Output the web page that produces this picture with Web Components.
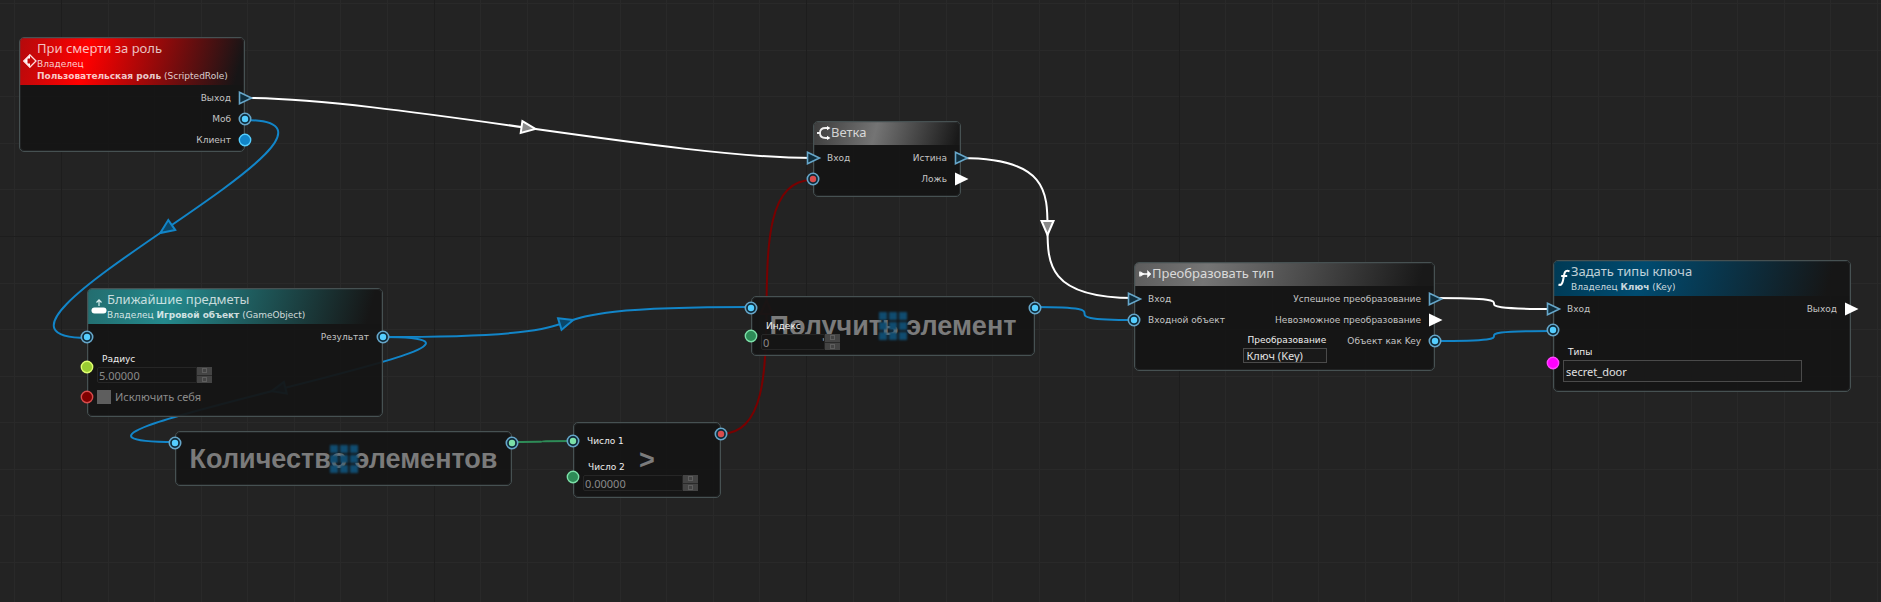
<!DOCTYPE html>
<html lang="ru">
<head>
<meta charset="utf-8">
<title>Граф сценария</title>
<style>
  html, body { margin: 0; background: #232323; }
  body { font-family: "Noto Sans", sans-serif; color: #c8c8c8; }
</style>
</head>
<body>
<graph-canvas>
  <graph-node x="19" y="37" w="226" h="115" hue="event" icon="event" caption="При смерти за роль">
    <span slot="sub">Владелец</span>
    <span slot="sub"><b>Пользовательская роль</b> (ScriptedRole)</span>
    <graph-port slot="out" kind="flow" linked>Выход</graph-port>
    <graph-port slot="out" kind="object" linked>Моб</graph-port>
    <graph-port slot="out" kind="object">Клиент</graph-port>
  </graph-node>

  <graph-node x="87" y="288" w="296" h="129" hue="query" icon="item" caption="Ближайшие предметы">
    <span slot="sub">Владелец <b>Игровой объект</b> (GameObject)</span>
    <graph-port slot="in" kind="object" linked></graph-port>
    <graph-port slot="in" kind="float" field><graph-number label="Радиус" value="5.00000" w="115"></graph-number></graph-port>
    <graph-port slot="in" kind="bool" field><graph-check label="Исключить себя"></graph-check></graph-port>
    <graph-port slot="out" kind="object" linked>Результат</graph-port>
  </graph-node>

  <graph-node x="175" y="431" w="337" h="55" big="Количество элементов" array>
    <graph-port slot="in" kind="object" linked></graph-port>
    <graph-port slot="out" kind="int" linked></graph-port>
  </graph-node>

  <graph-node x="573" y="422" w="148" h="76" big="&gt;">
    <graph-port slot="in" kind="int" linked tall>Число 1</graph-port>
    <graph-port slot="in" kind="int" field><graph-number label="Число 2" value="0.00000" w="115" flush></graph-number></graph-port>
    <graph-port slot="out" kind="bool" linked></graph-port>
  </graph-node>

  <graph-node x="751" y="296" w="284" h="60" big="Получить элемент" array>
    <graph-port slot="in" kind="object" linked></graph-port>
    <graph-port slot="in" kind="int" field><graph-number label="Индекс" value="0" w="79" flush></graph-number></graph-port>
    <graph-port slot="out" kind="object" linked></graph-port>
  </graph-node>

  <graph-node x="813" y="121" w="148" h="76" hue="flow-mid" icon="branch" caption="Ветка">
    <graph-port slot="in" kind="flow" linked>Вход</graph-port>
    <graph-port slot="in" kind="bool" linked></graph-port>
    <graph-port slot="out" kind="flow" linked>Истина</graph-port>
    <graph-port slot="out" kind="flow">Ложь</graph-port>
  </graph-node>

  <graph-node x="1134" y="262" w="301" h="109" hue="flow" icon="cast" caption="Преобразовать тип">
    <graph-port slot="in" kind="flow" linked>Вход</graph-port>
    <graph-port slot="in" kind="object" linked>Входной объект</graph-port>
    <graph-choice slot="center" label="Преобразование" value="Ключ (Key)"></graph-choice>
    <graph-port slot="out" kind="flow" linked>Успешное преобразование</graph-port>
    <graph-port slot="out" kind="flow">Невозможное преобразование</graph-port>
    <graph-port slot="out" kind="object" linked>Объект как Key</graph-port>
  </graph-node>

  <graph-node x="1553" y="260" w="298" h="132" hue="func" icon="func" caption="Задать типы ключа">
    <span slot="sub">Владелец <b>Ключ</b> (Key)</span>
    <graph-port slot="in" kind="flow" linked>Вход</graph-port>
    <graph-port slot="in" kind="object" linked></graph-port>
    <graph-port slot="in" kind="string" field><graph-text label="Типы" value="secret_door"></graph-text></graph-port>
    <graph-port slot="out" kind="flow">Выход</graph-port>
  </graph-node>
</graph-canvas>

<script>
const ICONS = {
  event: '<svg width="14" height="14" viewBox="0 0 14 14"><path d="M7 0 0 7l7 7V9.500H4.500v-5H7z" fill="#fff"/><path d="M7 1l6 6-6 6-6-6z" fill="none" stroke="#fdd" stroke-width="1.300"/></svg>',
  item: '<svg width="16" height="16" viewBox="0 0 16 16"><path d="M8 8V2M5.500 4.500 8 1.800l2.500 2.700" fill="none" stroke="#d8eeee" stroke-width="1.200"/><rect x="0.500" y="9.500" width="15" height="6" rx="3" fill="#fff"/></svg>',
  branch: '<svg width="14" height="14" viewBox="0 0 14 14"><path d="M0 7h3M11 2H8.500C5 2 3 4 3 7s2 5 5.500 5H11" fill="none" stroke="#eee" stroke-width="1.800"/><path d="M10 0l3.500 2L10 4.200zM10 9.800l3.500 2.200L10 14z" fill="#fff"/></svg>',
  cast: '<svg width="14" height="14" viewBox="0 0 14 14"><path d="M2 4.500v5M2 7h8" fill="none" stroke="#fff" stroke-width="1.600"/><path d="M3 5l3 2-3 2zM9.500 3.500 13 7 9.500 10.500z" fill="#fff" stroke="#fff" stroke-width="0.500"/></svg>',
  func: '<svg width="14" height="18" viewBox="0 0 14 18"><path d="M1.500 15.500c2.500 1.200 3.800-.5 4.500-4L7.300 5C7.900 2.200 9.500 1 12.500 2.300M4.200 7h6" fill="none" stroke="#fff" stroke-width="2"/></svg>'
};

const KINDS = {
  object: ['#1285c8', '#55ceff'],
  float:  ['#9acd32', '#e0ff70'],
  bool:   ['#800000', '#d84c4c'],
  int:    ['#2e8b57', '#7ce0a8'],
  string: ['#ff00ff', '#ff45ff']
};

const HUES = {
  event: 'linear-gradient(105deg, #b40a0c, #ff0000 30%, #171516 96%)',
  query: 'linear-gradient(105deg, #236d6f, #24898c 28%, #161616 95%)',
  flow: 'linear-gradient(105deg, #5c5c5c, #757575 24%, #191919 95%)',
  'flow-mid': 'linear-gradient(105deg, #3c3c3c, #747474 42%, #191919 97%)',
  func: 'linear-gradient(105deg, #003a55, #004b70 30%, #161616 92%)'
};

class Base extends HTMLElement {
  connectedCallback() {
    if (!this.shadowRoot) this.attachShadow({ mode: 'open' }).innerHTML = this.view();
  }
  at(name) { return (this.getAttribute(name) || '').replace(/&/g, '&amp;').replace(/</g, '&lt;').replace(/"/g, '&quot;'); }
}

class GraphCanvas extends Base {
  view() {
    /* x1, y1, x2, y2, handle length, colour, arrow fill, arrow angle */
    const wires = [
      [245, 98, 812, 158, 140, '#fff', '#8a8a8a', 8],
      [245, 120, 87, 338, 160, '#1285c8', '#0b4668', 145],
      [382, 337, 751, 307, 280, '#1285c8', '#0b4668', -17],
      [382, 337, 175, 442, 211, '#1285c8', '#0b4668', 166],
      [512, 442, 572, 441, 60, '#2e8b57'],
      [721, 434, 812, 180, 88, '#780000', '#400000', -90],
      [961, 158, 1134, 298, 173, '#fff', '#8a8a8a', 90],
      [1035, 307, 1134, 320, 99, '#1285c8'],
      [1435, 298, 1553, 309, 118, '#fff'],
      [1435, 341, 1553, 331, 118, '#1285c8']
    ];
    let grid = '', majors = '', lines = '';
    for (let i = -6; i < 90; i++) {
      const step = Math.round(i * 745 / 16), x = 61 + step, y = 236 + step;
      const s = `<path d="M${x} 0h1v3000h-1zM0 ${y}h4200v1H0z"/>`;
      if (i % 8) grid += s; else majors += s;
    }
    for (const [a, b, c, d, k, col, fill, ang] of wires) {
      lines += `<path d="M${a} ${b}C${a + k} ${b} ${c - k} ${d} ${c} ${d}" fill="none" stroke="${col}" stroke-width="2"/>`;
      if (fill) lines += `<path d="M-7-6 7 0-7 6z" fill="${fill}" stroke="${col}" stroke-width="2" transform="translate(${(a + c) / 2} ${(b + d) / 2}) rotate(${ang})"/>`;
    }
    return `<style>
      :host { display: block; position: relative; min-height: 100vh; overflow: hidden; background: #232323; }
      svg { position: absolute; inset: 0; width: 100%; height: 100%; }
    </style>
    <svg aria-hidden="true"><g fill="#292929"><path d="M0 50h4200v1H0zM0 3h4200v1H0z"/>${grid}</g><g fill="#1d1d1d">${majors}</g>${lines}</svg>
    <slot></slot>`;
  }
}

class GraphNode extends Base {
  view() {
    const cap = this.at('caption'), big = this.at('big');
    let dots = '';
    if (this.hasAttribute('array')) {
      for (let i = 0; i < 9; i++) dots += `<rect x="${2 + i % 3 * 10}" y="${2 + Math.floor(i / 3) * 10}" width="8" height="8"/>`;
      dots = `<svg class="dots" width="32" height="32" viewBox="0 0 32 32" fill="#104c70">${dots}</svg>`;
    }
    return `<style>
      :host {
        display: flex; flex-direction: column; box-sizing: border-box; position: absolute;
        left: ${this.at('x')}px; top: ${this.at('y')}px; width: ${this.at('w')}px; min-height: ${this.at('h')}px;
        border: 1px solid #465152; border-radius: 5px; background: rgba(21, 21, 21, .95);
        outline: 1px solid rgba(70, 81, 82, .25); outline-offset: -2px;
      }
      header {
        display: flex; align-items: center; padding: 1px 3px 3px; border-radius: 4px 4px 0 0;
        background: ${HUES[this.at('hue')] || 'none'};
      }
      header svg { flex: none; display: block; }
      h2 { margin: 0 0 1px; font: 400 13px/18px "Noto Sans", sans-serif; color: rgba(255, 255, 255, .75); white-space: nowrap; }
      ::slotted(span) { display: block; font: 9px/12px "DejaVu Sans", sans-serif; color: rgba(255, 255, 255, .8); white-space: nowrap; }
      .body { flex: 1; display: grid; padding-top: ${cap ? 2 : 0}px; }
      .col { grid-area: 1 / 1; display: flex; flex-direction: column; }
      .in { justify-self: start; z-index: 1; }
      .out { justify-self: end; z-index: 1; }
      .mid { justify-self: center; justify-content: flex-end; padding-bottom: 7px; }
      .big { justify-self: center; align-self: center; display: grid; place-items: center; }
      .big > * { grid-area: 1 / 1; }
      .big p { margin: 0; font: 700 27px/32px "Liberation Sans", sans-serif; color: rgba(255, 255, 255, .44); white-space: nowrap; }
      .dots { filter: blur(1px); }
    </style>
    ${cap ? `<header>${ICONS[this.at('icon')]}<div><h2>${cap}</h2><slot name="sub"></slot></div></header>` : ''}
    <div class="body">
      ${big ? `<div class="col big">${dots}<p>${big}</p></div>` : ''}
      <div class="col mid"><slot name="center"></slot></div>
      <div class="col in"><slot name="in"></slot></div>
      <div class="col out"><slot name="out"></slot></div>
    </div>`;
  }
}

class GraphPort extends Base {
  view() {
    const kind = this.at('kind'), linked = this.hasAttribute('linked');
    const out = this.slot === 'out', field = this.hasAttribute('field');
    let mark;
    if (kind === 'flow') {
      mark = linked
        ? '<path d="M1.500 1.200 13.500 7 1.500 12.800z" fill="#102e3d" stroke="#66a6c9" stroke-width="1.600"/>'
        : '<path d="M1 0.500 14.500 7 1 13.500z" fill="#fff"/>';
    } else {
      const [base, light] = KINDS[kind];
      mark = linked
        ? `<circle cx="7" cy="7" r="5.700" fill="#0e2a39" stroke="#66a6c9" stroke-width="1.600"/><circle cx="7" cy="7" r="3.200" fill="${light}"/>`
        : `<circle cx="7" cy="7" r="5.700" fill="${base}" stroke="${light}" stroke-width="1.400"/>`;
    }
    return `<style>
      :host {
        display: flex; align-items: center; min-height: ${this.hasAttribute('tall') ? 36 : 21}px;
        flex-direction: ${out ? 'row-reverse' : 'row'}; gap: ${field ? 3 : 7}px;
        ${out ? 'margin-right' : 'margin-left'}: -8px;
        font: 9px/14px "DejaVu Sans", sans-serif; color: ${this.hasAttribute('tall') ? '#eee' : '#c4c4c4'}; white-space: nowrap;
      }
      svg { flex: none; display: block; overflow: visible; margin-top: ${field && kind !== 'bool' ? 4 : 0}px; }
    </style><svg width="14" height="14" viewBox="0 0 14 14">${mark}</svg><slot></slot>`;
  }
}

const FIELD_CSS = `
  :host { display: block; }
  label.cap { display: block; padding-left: 5px; font: 9px/15px "DejaVu Sans", sans-serif; color: #eee; white-space: nowrap; }
  input, select, button { margin: 0; padding: 0; border: 0; border-radius: 0; appearance: none; outline: 0; box-sizing: border-box; background: none; }
`;

class GraphNumber extends Base {
  view() {
    return `<style>${FIELD_CSS}
      :host { margin-top: ${this.hasAttribute('flush') ? 1 : 5}px; }
      .row { display: flex; width: ${this.at('w')}px; height: 16px; }
      input { flex: 1; min-width: 0; height: 16px; padding-left: 1px; border: 1px solid #262626; border-radius: 2px 0 0 2px; font: 11px/14px "Noto Sans", sans-serif; color: #8a8a8a; }
      .spin { display: flex; flex-direction: column; gap: 1px; width: 15px; background: #2a2a2a; }
      button { flex: 1; display: grid; place-items: center; background: #444; }
      i { width: 3px; height: 3px; border: 1px solid #5e5e5e; }
    </style>
    <label class="cap" for="f">${this.at('label')}</label>
    <div class="row"><input id="f" type="text" inputmode="decimal" value="${this.at('value')}">
    <div class="spin"><button type="button" aria-label="Больше"><i></i></button><button type="button" aria-label="Меньше"><i></i></button></div></div>`;
  }
}

class GraphCheck extends Base {
  view() {
    return `<style>${FIELD_CSS}
      :host { display: flex; align-items: center; gap: 4px; margin: 6px 0; }
      input { width: 14px; height: 14px; background: #5e5e5e; }
      label { font: 11px/16px "Noto Sans", sans-serif; color: #8a8a8a; white-space: nowrap; }
    </style><input id="f" type="checkbox"><label for="f">${this.at('label')}</label>`;
  }
}

class GraphText extends Base {
  view() {
    return `<style>${FIELD_CSS}
      :host { margin-top: 5px; }
      input { display: block; width: 239px; height: 22px; padding: 0 2px; border: 1px solid #4a4a4a; background: #191919; font: 11px/20px "Noto Sans", sans-serif; color: #e0e0e0; }
    </style><label class="cap" for="f">${this.at('label')}</label><input id="f" type="text" value="${this.at('value')}">`;
  }
}

class GraphChoice extends Base {
  view() {
    return `<style>${FIELD_CSS}
      select { display: block; width: 84px; height: 15px; padding: 0 3px; border: 1px solid #4a4a4a; background: #191919; font: 11px/13px "Noto Sans", sans-serif; color: #e0e0e0; }
    </style><label class="cap" for="f">${this.at('label')}</label><select id="f"><option>${this.at('value')}</option></select>`;
  }
}

customElements.define('graph-canvas', GraphCanvas);
customElements.define('graph-node', GraphNode);
customElements.define('graph-port', GraphPort);
customElements.define('graph-number', GraphNumber);
customElements.define('graph-check', GraphCheck);
customElements.define('graph-text', GraphText);
customElements.define('graph-choice', GraphChoice);
</script>
</body>
</html>
